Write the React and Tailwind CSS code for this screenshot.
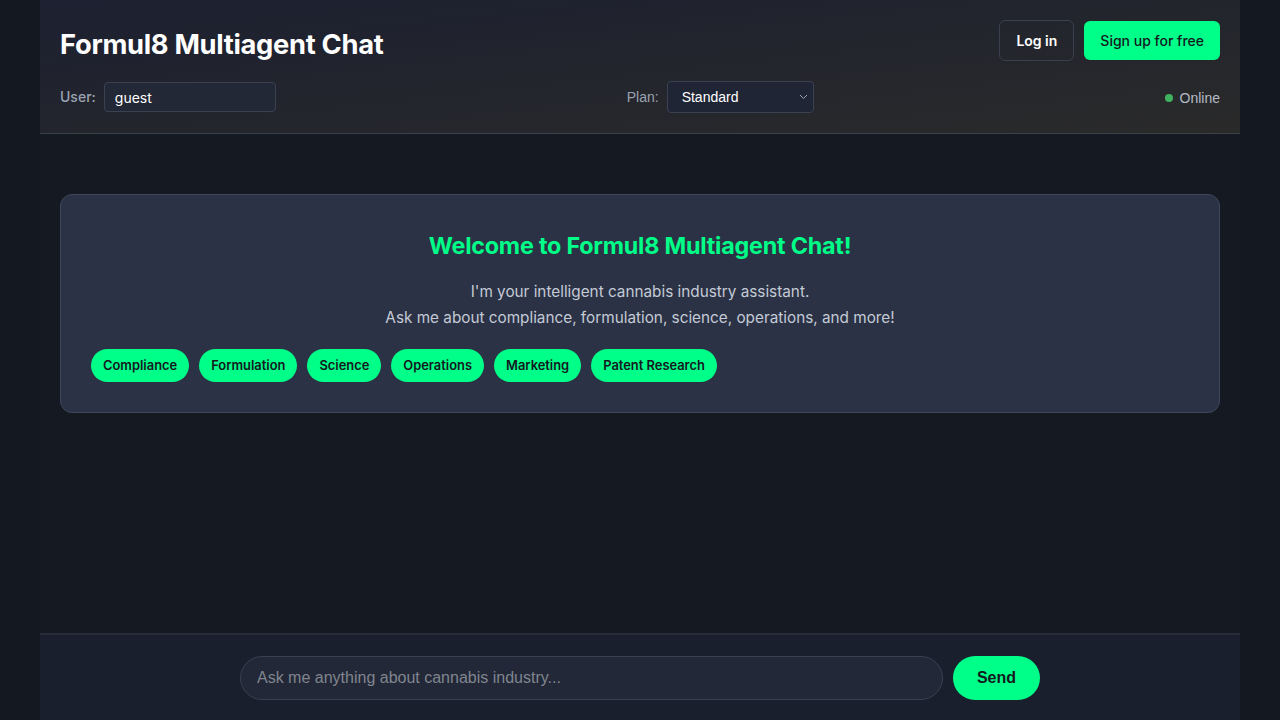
import { useState } from 'react'

const topics = ['Compliance', 'Formulation', 'Science', 'Operations', 'Marketing', 'Patent Research']

const App = () => {
  const [user, setUser] = useState('guest')
  const [plan, setPlan] = useState('Standard')
  const [message, setMessage] = useState('')

  return (
    <div className="min-h-screen bg-[#141821] font-['Inter',sans-serif]">
      <div className="max-w-[1200px] mx-auto h-screen flex flex-col bg-[#151922]">
        {/* Header */}
        <header className="px-5 pt-5 pb-5 border-b border-[#3a404c] bg-gradient-to-br from-[#1c2030] to-[#2a2a2a]">
          <div className="flex items-center justify-between h-[41px]">
            <h1 className="mt-[9px] text-[27.3px] font-bold text-white tracking-[-0.3px]">Formul8 Multiagent Chat</h1>
            <div className="flex items-center gap-[10px]">
              <button className="h-[41px] px-4 rounded-md border border-[#3a404d] text-white text-sm font-semibold">
                Log in
              </button>
              <button className="h-[39px] px-4 rounded-md bg-[#00ff88] text-[#14181f] text-sm font-medium">
                Sign up for free
              </button>
            </div>
          </div>
          <div className="mt-5 flex items-center justify-between h-[32px]">
            <div className="flex items-center gap-2">
              <span className="text-sm font-medium text-[#9aa3b2]">User:</span>
              <input
                value={user}
                onChange={(e) => setUser(e.target.value)}
                className="w-[172px] h-[30px] px-[10px] rounded bg-[#222836] border border-[#3a4150] text-white text-sm outline-none"
              />
            </div>
            <div className="flex items-center gap-2 font-['Liberation_Sans',sans-serif]">
              <span className="text-sm text-[#9aa3b2]">Plan:</span>
              <div className="relative">
                <select
                  value={plan}
                  onChange={(e) => setPlan(e.target.value)}
                  className="appearance-none w-[147px] h-[32px] pl-[14px] rounded bg-[#1f2535] border border-[#3a4150] text-white text-sm outline-none"
                >
                  <option>Standard</option>
                  <option>Pro</option>
                  <option>Enterprise</option>
                </select>
                <svg className="absolute right-[6px] top-[13px] pointer-events-none" width="9" height="6" viewBox="0 0 9 6" fill="none">
                  <path d="M1 1l3.5 3.5L8 1" stroke="#9aa3b2" strokeWidth="1" />
                </svg>
              </div>
            </div>
            <div className="flex items-center gap-[7px] pt-[2px] font-['Liberation_Sans',sans-serif]">
              <span className="w-2 h-2 rounded-full bg-[#3fb25f]"></span>
              <span className="text-sm text-[#b4bbc7]">Online</span>
            </div>
          </div>
        </header>

        {/* Main */}
        <main className="flex-1 px-5 pt-[60px]">
          <div className="rounded-xl border border-[#3e4659] bg-[#2b3245] p-[30px]">
            <h2 className="pt-1 mb-[15px] text-center text-[23.3px] font-bold text-[#00ff88] tracking-[-0.2px]">
              Welcome to Formul8 Multiagent Chat!
            </h2>
            <p className="text-center text-[15.3px] leading-[26px] text-[#c4cad6]">
              I'm your intelligent cannabis industry assistant.
              <br />
              Ask me about compliance, formulation, science, operations, and more!
            </p>
            <div className="mt-[18px] flex flex-wrap gap-[10px]">
              {topics.map((t) => (
                <button
                  key={t}
                  className="h-[33px] px-3 rounded-full bg-[#00ff88] text-[#14181f] text-[12.9px] font-semibold"
                >
                  {t}
                </button>
              ))}
            </div>
          </div>
        </main>

        {/* Footer input */}
        <footer className="border-t-2 border-[#262b3a] bg-[#1a1f2e] pt-[21px] pb-5">
          <div className="max-w-[800px] mx-auto flex gap-[10px] font-['Liberation_Sans',sans-serif]">
            <input
              value={message}
              onChange={(e) => setMessage(e.target.value)}
              placeholder="Ask me anything about cannabis industry..."
              className="flex-1 h-[44px] px-4 rounded-full bg-[#222837] border border-[#3a404e] text-white text-base placeholder-[#80858f] outline-none"
            />
            <button className="w-[87px] h-[44px] rounded-full bg-[#00ff88] text-[#14181f] text-base font-bold">
              Send
            </button>
          </div>
        </footer>
      </div>
    </div>
  )
}

export default App
